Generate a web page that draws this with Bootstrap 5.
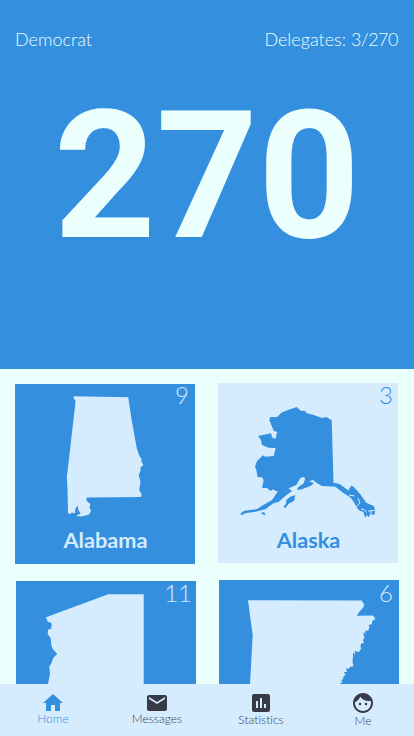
<!DOCTYPE html>
<html lang="en">
<head>
<meta charset="utf-8">
<meta name="viewport" content="width=device-width, initial-scale=1">
<title>270</title>
<link href="https://cdn.jsdelivr.net/npm/bootstrap@5.3.0/dist/css/bootstrap.min.css" rel="stylesheet">
<style>
:root{--blue:#348fdf;--mint:#ebfffc;--sky:#d5ecff;--ink:#373a47}
body{font-family:Lato,"Open Sans",sans-serif;background:var(--mint);height:736px;font-variant-ligatures:none}
.hero{background:var(--blue);color:var(--mint);height:369px;flex:none}
.hero-top{font-size:18px;line-height:22px;font-weight:300;padding:28px 16px 0 15px}
.tally{letter-spacing:-.5px}
.goal{font-family:Roboto,sans-serif;font-weight:700;font-size:178px;line-height:210px;margin-top:21px;text-align:center}
.states{display:grid;grid-template-columns:180px 180px;column-gap:23px;row-gap:17px;padding:15px 0 0 15px;flex:1 1 0;min-height:0;overflow:hidden}
.state{width:180px;height:180px;background:var(--blue);color:var(--sky)}
.state.won{background:var(--sky);color:var(--blue)}
.raised{margin-top:-1px}
.shifted{margin-left:1px}
.state svg{width:180px;height:140px;fill:currentColor;display:block}
.votes{top:-4px;right:6px;font-size:24px;line-height:30px;font-weight:300}
.raised .votes{top:-3px}
.won .votes{right:5px}
.shifted .votes{top:-3px}
.shifted.raised .votes{top:-2px}
.shifted .wide{right:4px}
.state-name{font-size:21.7px;line-height:26px;font-weight:700;margin-top:3px;padding-left:1px}
.raised .state-name{margin-top:4px}
.tabs{background:var(--sky);height:52px;flex:none;padding-left:1px}
.tab{width:104px;color:var(--ink);font-size:12px;line-height:14px;font-weight:300;text-decoration:none;padding-top:7px}
.tab:last-child{width:100px}
.tab svg{width:24px;height:24px;fill:currentColor;display:block}
.tab span{margin-top:-3px}
.tab.current{color:var(--blue)}
.tab .low1{margin-top:-2px}
.tab .low2{margin-top:-1px}
</style>
</head>
<body class="d-flex flex-column overflow-hidden">
<header class="hero">
  <div class="hero-top d-flex justify-content-between"><span>Democrat</span><span>Delegates: <span class="tally">3/270</span></span></div>
  <div class="goal">270</div>
</header>
<main class="states">
  <section class="state position-relative text-center">
    <div class="votes position-absolute">9</div>
    <svg viewBox="15 384 180 140"><path d="M73.5 396.2 128.2 397.2 131.5 419 136.8 448.5 139 455 141.5 459 141.5 462 143.4 465 140.5 467.5 140.5 471 138.7 475 140.5 482 139.2 490 141.7 494.500 141 497 86.800 497.500 86.300 500.500 90.300 504 89.500 508 91 510.500 89.300 514.500 81.700 516.500 76 516 80.800 513.500 78.500 510.500 77.800 505.500 75.500 508.500 74.800 513.500 72 512.500 70 514 68 513 67.500 490 66.800 476.500 67.700 470 75.600 401 73.800 398.500Z"/></svg>
    <div class="state-name">Alabama</div>
  </section>
  <section class="state won raised position-relative text-center">
    <div class="votes position-absolute">3</div>
    <svg viewBox="218 383 180 140">
      <path d="M296.7 407 300.700 410.700 304.700 410.700 306.700 413.300 313 414.700 322 418 326.300 417 331.700 420.300 333.500 482.700 339.700 484 348.300 490.500 351.300 485.500 354 487.300 360.300 494.300 366.300 502.700 373.700 506 375.300 510.700 374.300 515 370.300 514 368.700 517.300 367 515 365.300 517.700 363.300 511.700 360 511 357 508 354.300 502.700 350.300 497.300 343.700 493.300 335.300 486.700 322 486 317 483.300 313 480 309 481.500 314 483 311 485.700 302 489.300 297 490 298 487.300 303.700 483.300 305.300 478.300 303 477 300.300 478.300 296.300 485 288.700 488.300 292 491 285.300 496 278.700 501.700 273 503.500 265.300 509.300 255.300 511.700 245.300 513.300 242 515 240 514 244.300 510.700 257 509 262 505.700 272 500 277.700 491.700 273 489.500 270.300 491 267 488 262 488 263.700 480 262 477.300 257.700 477.300 256.300 470 255 466.700 257 461 263 455.300 265.300 456.700 273.700 456 275.700 448 268.700 447.700 262 445 261 440 258 436 271 433.300 272 437.300 275.500 439 276.700 433.300 277.500 432 273.700 430.700 269.300 420 270.300 417 277 417 282 412.300 290.300 409.300Z"/>
      <path d="M295.300 495 294.300 500.700 289 503.500 285.300 508.300 283.500 506.700 286 504 286.300 500 290.300 496.700ZM261 512.900 264 512 266 514.900 262 514.300Z"/>
      <path d="M349 495 354.500 496 M358 498 360 503 356 507M361 509 364 509.500 366.500 512.500M368 511 375 510.500M371 514V511" fill="none" stroke="#d5ecff" stroke-width="1"/>
    </svg>
    <div class="state-name">Alaska</div>
  </section>
  <section class="state shifted position-relative text-center" aria-label="Arizona">
    <div class="votes wide position-absolute">11</div>
    <svg viewBox="16 581 180 140"><path d="M108.300 594.200H143.700V715H100L46 692 48 684 50 674 49.300 666.700 51.500 663 53.300 657.700 57.300 654 52.700 649 51.500 646 50.700 638.300 47.700 634 48 629.500 51 629 51.700 624.500 51 622.700 47.700 621.700 46 617.300Z"/></svg>
  </section>
  <section class="state raised shifted position-relative text-center" aria-label="Arkansas">
    <div class="votes position-absolute">6</div>
    <svg viewBox="219 580 180 140"><path d="M248 600.200 362 600.500 362.500 602.500 364.300 604 363.500 607 360 611 356.700 615.800 373 615.500 375.500 619 372 621 372 624 368.500 625 369.500 627 368 631 365.500 630.500 366 634 363 632.500 364.500 638 363 640 364 643 361 643.500 360.500 646 361 649 359 652 354.500 651 355 654 353 656 352.500 662 353.500 666 350 667 348.500 669 346 668 347 672 344 672 345.500 675 343 677 343.500 679 341 680 342.500 682 339.500 684 338 705H256L250 700V684L252.700 635Z"/><path d="M364.500 633.500 367 630.500M353.500 659V653" fill="none" stroke="#348fdf"/></svg>
  </section>
</main>
<nav class="tabs d-flex">
  <a href="#" class="tab current d-flex flex-column align-items-center"><svg viewBox="0 0 24 24"><path d="M10 20v-6h4v6h5v-8h3L12 3 2 12h3v8z"/></svg><span>Home</span></a>
  <a href="#" class="tab d-flex flex-column align-items-center"><svg viewBox="0 0 24 24"><path d="M20 4H4c-1.100 0-1.990.9-1.990 2L2 18c0 1.100.9 2 2 2h16c1.100 0 2-.9 2-2V6c0-1.100-.9-2-2-2zm0 4-8 5-8-5V6l8 5 8-5v2z"/></svg><span>Messages</span></a>
  <a href="#" class="tab d-flex flex-column align-items-center"><svg viewBox="0 0 24 24"><path d="M19 3H5c-1.100 0-2 .9-2 2v14c0 1.100.9 2 2 2h14c1.100 0 2-.9 2-2V5c0-1.100-.9-2-2-2zM9 17H7v-7h2v7zm4 0h-2V7h2v10zm4 0h-2v-4h2v4z"/></svg><span class="low1">Statistics</span></a>
  <a href="#" class="tab d-flex flex-column align-items-center"><svg viewBox="0 0 24 24"><path fill-rule="evenodd" d="M9 11.750a1.250 1.250 0 1 0 0 2.500 1.250 1.250 0 0 0 0-2.500zm6 0a1.250 1.250 0 1 0 0 2.500 1.250 1.250 0 0 0 0-2.500zM12 2C6.480 2 2 6.480 2 12s4.480 10 10 10 10-4.480 10-10S17.520 2 12 2zm0 18c-4.410 0-8-3.590-8-8 0-.29.02-.58.05-.86 2.360-1.050 4.230-2.980 5.210-5.370C11.070 8.330 14.050 10 17.420 10c.78 0 1.530-.09 2.250-.26.21.71.33 1.470.33 2.260 0 4.410-3.590 8-8 8z"/></svg><span class="low2">Me</span></a>
</nav>
<script src="https://cdn.jsdelivr.net/npm/bootstrap@5.3.0/dist/js/bootstrap.bundle.min.js"></script>
</body>
</html>
